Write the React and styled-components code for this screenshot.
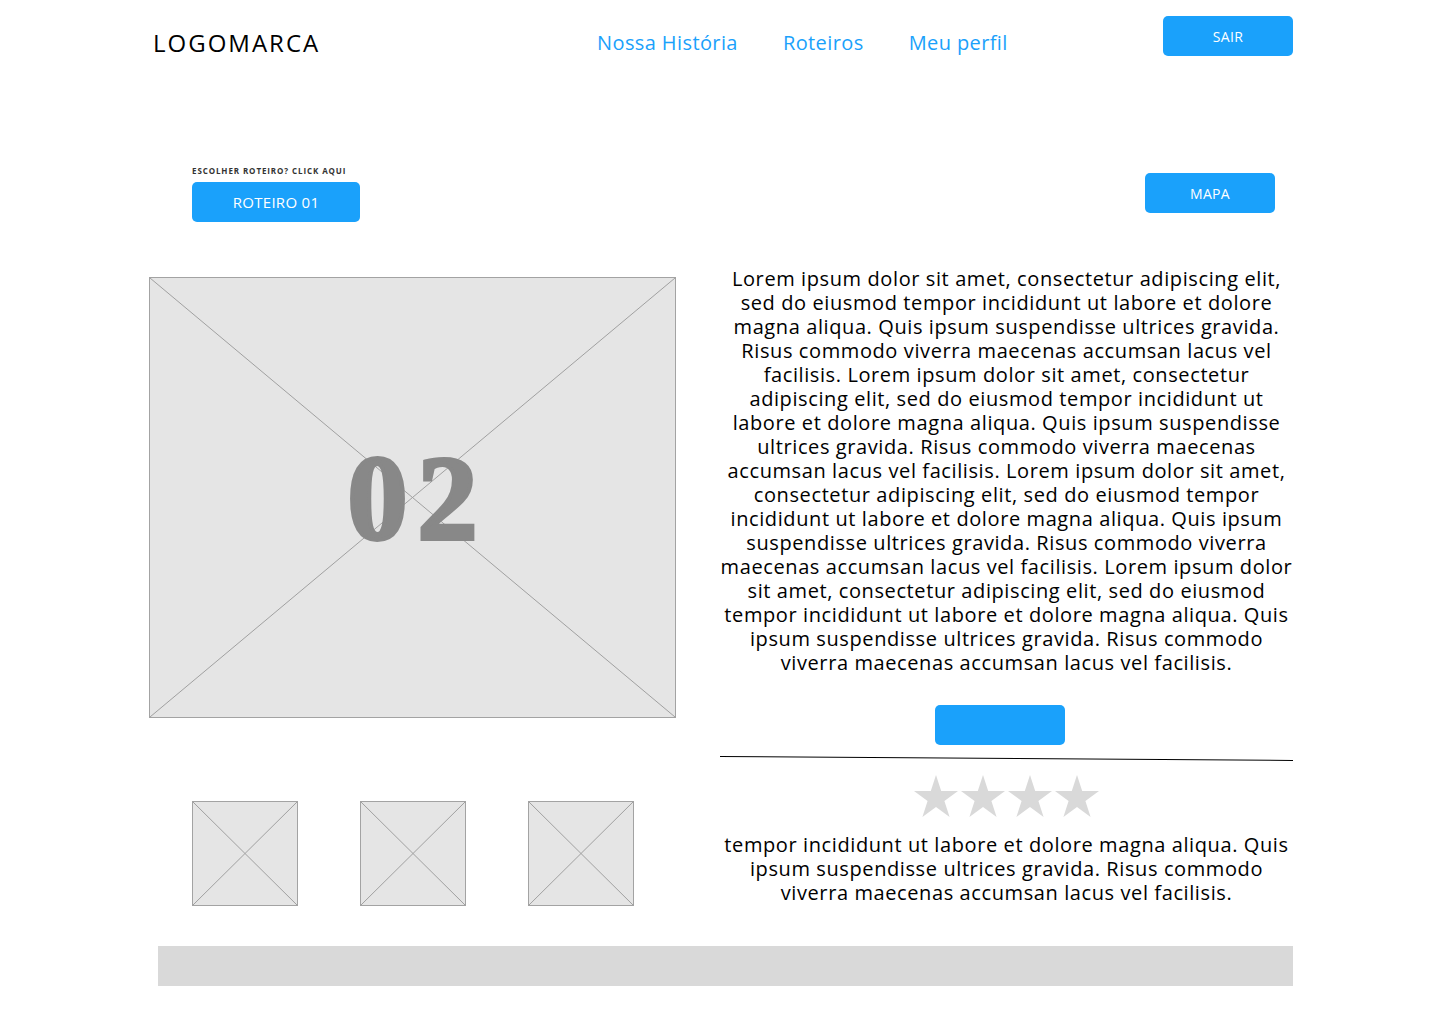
import React from 'react';
import styled, { createGlobalStyle } from 'styled-components';

const GlobalStyle = createGlobalStyle`
  body {
    margin: 0;
    background: #fff;
    font-family: "Open Sans", "Noto Sans", sans-serif;
    color: #000;
  }
`;

const BLUE = '#1aa1fb';

const Page = styled.div`
  width: 1440px;
  min-height: 1024px;
  position: relative;
`;

const Header = styled.header`
  display: flex;
  align-items: flex-start;
  padding: 16px 147px 0 153px;
  height: 40px;
`;

const Logo = styled.div`
  width: 444px;
  font-size: 24px;
  line-height: 1;
  margin-top: 15px;
  letter-spacing: 2px;
`;

const Nav = styled.nav`
  display: flex;
  gap: 45px;
  margin-top: 13px;
`;

const NavLink = styled.a`
  color: ${BLUE};
  font-size: 20px;
  line-height: 28px;
  letter-spacing: 0.4px;
  text-decoration: none;
  cursor: pointer;
`;

const Button = styled.button`
  width: ${({ $w }) => $w || 130}px;
  height: 40px;
  border: none;
  border-radius: 5px;
  background: ${BLUE};
  color: #fff;
  font-family: inherit;
  font-size: ${({ $fs }) => $fs || 14}px;
  letter-spacing: 0.3px;
  cursor: pointer;
  padding: 0;
  margin-left: ${({ $ml }) => $ml || 0}px;
  margin-top: ${({ $mt }) => $mt || 0}px;
  flex-shrink: 0;
`;

const HeaderButton = styled(Button)`
  margin-left: auto;
`;

const Main = styled.main`
  padding: 0 147px 0 149px;
`;

const ToolRow = styled.div`
  display: flex;
  justify-content: space-between;
  align-items: flex-start;
  margin-top: 110px;
  padding: 0 18px 0 43px;
`;

const Chooser = styled.div`
  display: flex;
  flex-direction: column;
`;

const ChooserLabel = styled.span`
  font-size: 8px;
  font-weight: 700;
  line-height: 10px;
  color: #333;
  margin-bottom: 6px;
  letter-spacing: 0.9px;
`;

const Content = styled.div`
  display: grid;
  grid-template-columns: 527px 573px;
  column-gap: 44px;
  margin-top: 45px;
`;

const LeftCol = styled.div`
  display: flex;
  flex-direction: column;
  padding-top: 10px;
`;

const Placeholder = styled.div`
  position: relative;
  box-sizing: border-box;
  width: ${({ $w }) => $w}px;
  height: ${({ $h }) => $h}px;
  background: #e5e5e5;
  border: 1px solid #a3a3a3;
  display: flex;
  align-items: center;
  justify-content: center;

  svg {
    position: absolute;
    inset: 0;
    width: 100%;
    height: 100%;
  }
`;

const BigNumber = styled.span`
  position: relative;
  font-family: "Liberation Serif", "DejaVu Serif", serif;
  font-weight: 700;
  font-size: 120px;
  line-height: 1;
  color: #888;
  -webkit-text-stroke: 4px #888;
  letter-spacing: 10px;
  margin-left: 10px;
  margin-top: 2px;
`;

const Thumbs = styled.div`
  display: flex;
  gap: 62px;
  padding-left: 43px;
  margin-top: 83px;
`;

const RightCol = styled.div`
  display: flex;
  flex-direction: column;
`;

const Paragraph = styled.p`
  margin: 0;
  font-size: 20px;
  line-height: 24px;
  letter-spacing: 0.6px;
  text-align: center;
  white-space: nowrap;

  span {
    display: block;
  }
`;

const Divider = styled.div`
  width: 573px;
  border-top: 1px solid #000;
  transform: rotate(0.4deg);
  margin-top: 13px;
`;

const Stars = styled.div`
  display: flex;
  justify-content: center;
  gap: 3px;
  margin: 16px 0 16px;
`;

const Footer = styled.footer`
  margin: 40px 147px 0 158px;
  height: 40px;
  background: #d9d9d9;
`;

const Cross = () => (
  <svg viewBox="0 0 100 100" preserveAspectRatio="none">
    <line x1="0" y1="0" x2="100" y2="100" stroke="#a0a0a0" strokeWidth="1" vectorEffect="non-scaling-stroke" />
    <line x1="100" y1="0" x2="0" y2="100" stroke="#a0a0a0" strokeWidth="1" vectorEffect="non-scaling-stroke" />
  </svg>
);

const Star = () => (
  <svg width="44" height="42" viewBox="0 0 44 42">
    <polygon
      fill="#d9d9d9"
      points="22,0 27.2,16 44,16 30.4,25.9 35.6,42 22,32 8.4,42 13.6,25.9 0,16 16.8,16"
    />
  </svg>
);

const bodyLines = [
  'Lorem ipsum dolor sit amet, consectetur adipiscing elit,',
  'sed do eiusmod tempor incididunt ut labore et dolore',
  'magna aliqua. Quis ipsum suspendisse ultrices gravida.',
  'Risus commodo viverra maecenas accumsan lacus vel',
  'facilisis. Lorem ipsum dolor sit amet, consectetur',
  'adipiscing elit, sed do eiusmod tempor incididunt ut',
  'labore et dolore magna aliqua. Quis ipsum suspendisse',
  'ultrices gravida. Risus commodo viverra maecenas',
  'accumsan lacus vel facilisis. Lorem ipsum dolor sit amet,',
  'consectetur adipiscing elit, sed do eiusmod tempor',
  'incididunt ut labore et dolore magna aliqua. Quis ipsum',
  'suspendisse ultrices gravida. Risus commodo viverra',
  'maecenas accumsan lacus vel facilisis. Lorem ipsum dolor',
  'sit amet, consectetur adipiscing elit, sed do eiusmod',
  'tempor incididunt ut labore et dolore magna aliqua. Quis',
  'ipsum suspendisse ultrices gravida. Risus commodo',
  'viverra maecenas accumsan lacus vel facilisis.',
];

const reviewLines = [
  'tempor incididunt ut labore et dolore magna aliqua. Quis',
  'ipsum suspendisse ultrices gravida. Risus commodo',
  'viverra maecenas accumsan lacus vel facilisis.',
];

const App = () => {
  return (
    <Page>
      <GlobalStyle />
      <Header>
        <Logo>LOGOMARCA</Logo>
        <Nav>
          <NavLink>Nossa História</NavLink>
          <NavLink>Roteiros</NavLink>
          <NavLink>Meu perfil</NavLink>
        </Nav>
        <HeaderButton>SAIR</HeaderButton>
      </Header>

      <Main>
        <ToolRow>
          <Chooser>
            <ChooserLabel>ESCOLHER ROTEIRO? CLICK AQUI</ChooserLabel>
            <Button $w={168} $fs={15}>ROTEIRO 01</Button>
          </Chooser>
          <Button $mt={7}>MAPA</Button>
        </ToolRow>

        <Content>
          <LeftCol>
            <Placeholder $w={527} $h={441}>
              <Cross />
              <BigNumber>02</BigNumber>
            </Placeholder>
            <Thumbs>
              {[0, 1, 2].map((i) => (
                <Placeholder key={i} $w={106} $h={105}>
                  <Cross />
                </Placeholder>
              ))}
            </Thumbs>
          </LeftCol>

          <RightCol>
            <Paragraph>
              {bodyLines.map((l, i) => (
                <span key={i}>{l}</span>
              ))}
            </Paragraph>
            <Button $ml={215} $mt={30} aria-label="ação" />
            <Divider />
            <Stars>
              {[0, 1, 2, 3].map((i) => (
                <Star key={i} />
              ))}
            </Stars>
            <Paragraph>
              {reviewLines.map((l, i) => (
                <span key={i}>{l}</span>
              ))}
            </Paragraph>
          </RightCol>
        </Content>
      </Main>

      <Footer />
    </Page>
  );
};

export default App;
